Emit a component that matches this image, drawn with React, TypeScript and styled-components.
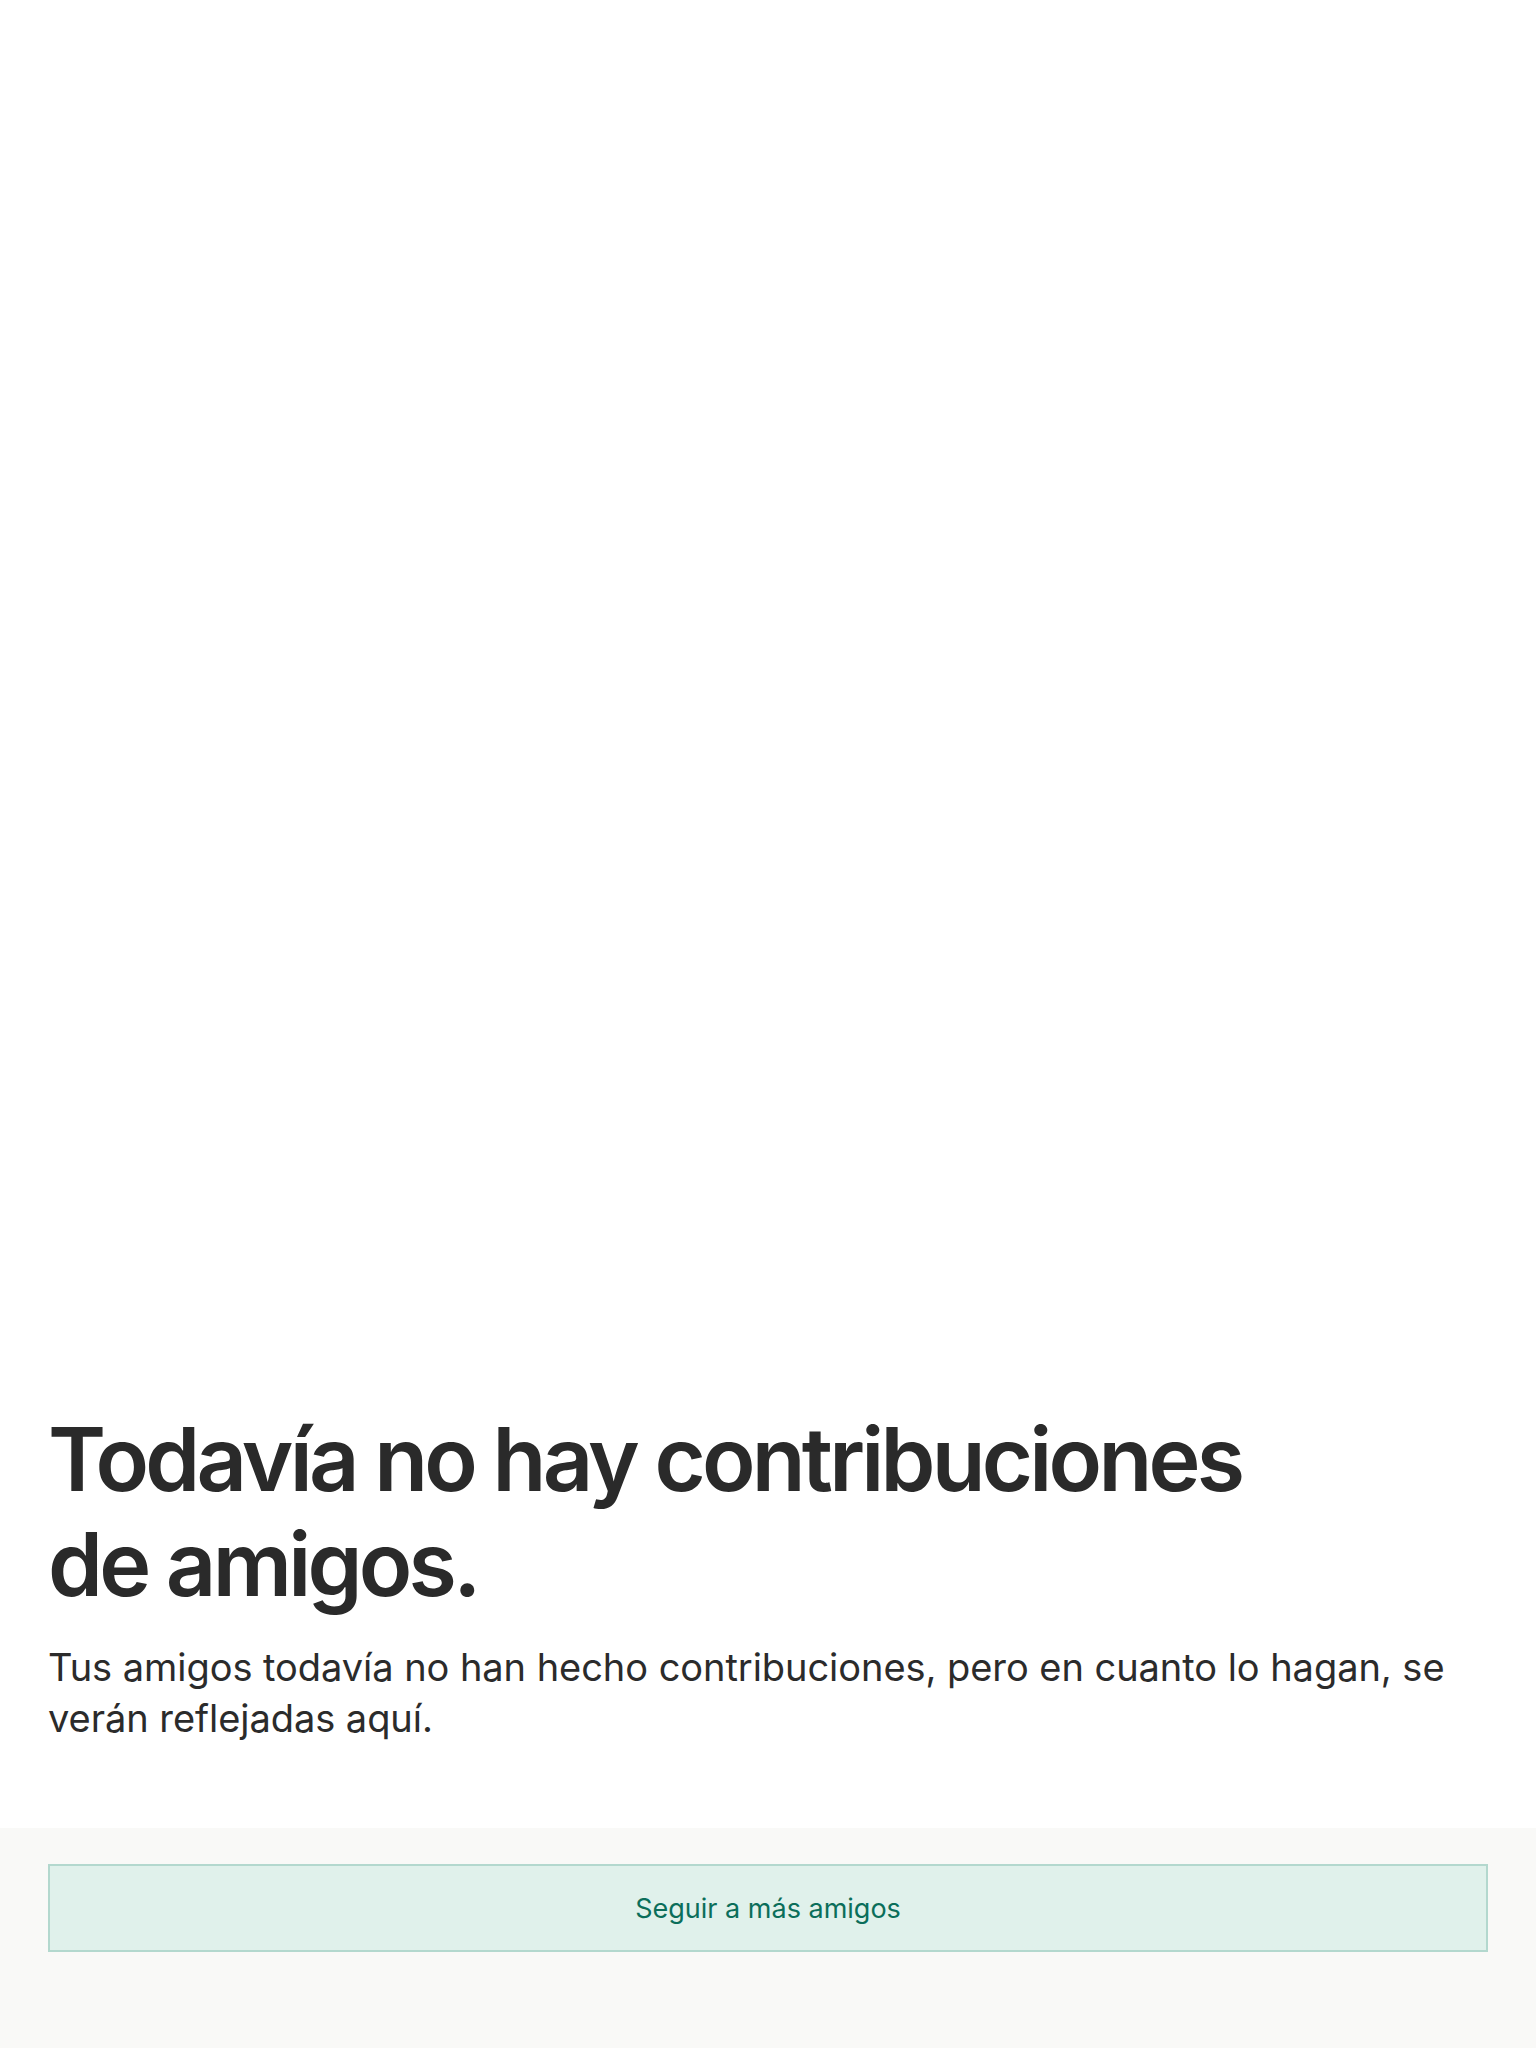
import styled, { createGlobalStyle } from "styled-components";

const GlobalStyle = createGlobalStyle`
    html, body {
        margin: 0;
        padding: 0;
        background: #ffffff;
    }
    body {
        font-family: Inter, "Noto Sans", "Liberation Sans", sans-serif;
        -webkit-font-smoothing: antialiased;
    }
`;

const Page = styled.div`
    display: flex;
    flex-direction: column;
    min-height: 2048px;
    background-color: #fff;
`;

const Spacer = styled.div`
    flex: 1;
`;

const EmptyState = styled.section`
    display: flex;
    flex-direction: column;
    gap: 25px;
    padding: 0 48px 84px;
`;

const Title = styled.h1`
    margin: 0;
    font-size: 88px;
    line-height: 105px;
    font-weight: 600;
    letter-spacing: -3.75px;
    color: #2a2a2a;
`;

const Description = styled.p`
    margin: 0;
    font-size: 38px;
    line-height: 51px;
    font-weight: 400;
    letter-spacing: -0.05px;
    color: #2b2b2b;
`;

const Footer = styled.footer`
    background-color: #f9f9f7;
    padding: 36px 48px 96px;
`;

const FollowButton = styled.button`
    display: flex;
    align-items: center;
    justify-content: center;
    width: 100%;
    height: 88px;
    background-color: #e0f1eb;
    border: 2px solid #b3d8ce;
    border-radius: 0;
    color: #0b6e5a;
    font-family: inherit;
    font-size: 27px;
    font-weight: 400;
    cursor: pointer;
`;

const App = () => {
    return (
        <>
            <GlobalStyle />
            <Page>
                <Spacer />
                <EmptyState>
                    <Title>
                        Todavía no hay contribuciones
                        <br />
                        de amigos.
                    </Title>
                    <Description>
                        Tus amigos todavía no han hecho contribuciones, pero en cuanto lo hagan, se verán reflejadas aquí.
                    </Description>
                </EmptyState>
                <Footer>
                    <FollowButton>Seguir a más amigos</FollowButton>
                </Footer>
            </Page>
        </>
    );
};

export default App;
